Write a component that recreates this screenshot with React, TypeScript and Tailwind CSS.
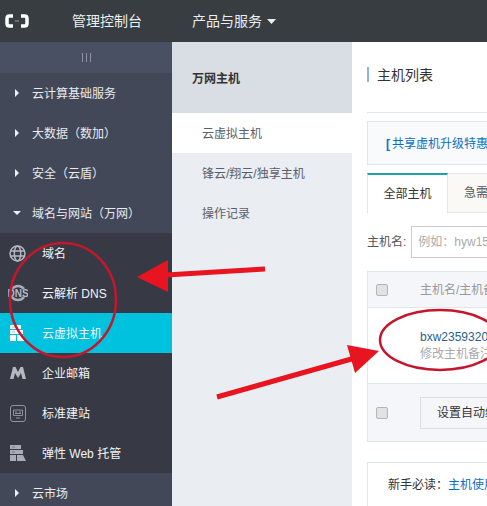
import type { ReactNode } from 'react';

const font = { fontFamily: '"Liberation Sans", "Noto Sans CJK SC", sans-serif' };

function Caret({ open }: { open?: boolean }) {
  return (
    <svg width="8" height="8" viewBox="0 0 8 8" className="shrink-0 text-[#eef0f3]">
      {open ? <path d="M0 2h8L4 6z" fill="currentColor" /> : <path d="M2 0l4 4-4 4z" fill="currentColor" />}
    </svg>
  );
}

function TopItem({ label, open }: { label: string; open?: boolean }) {
  return (
    <div className="flex h-10 items-center gap-[11px] pl-[13px] text-xs text-[#e8eaee]">
      <Caret open={open} />
      <span className="pt-[2px]">{label}</span>
    </div>
  );
}

function SubItem({ icon, label, active }: { icon: ReactNode; label: string; active?: boolean }) {
  return (
    <div className={`flex h-10 items-center text-xs text-[#f2f3f5] ${active ? 'bg-[#00c1de]' : ''}`}>
      <span className="flex w-[42px] justify-center pl-[1px] pr-[8px]">{icon}</span>
      <span className="pt-[2px]">{label}</span>
    </div>
  );
}

const GlobeIcon = (
  <svg width="17" height="17" viewBox="0 0 17 17" fill="none" stroke="#b4b8c0" strokeWidth="1.5">
    <circle cx="8.5" cy="8.5" r="7.5" />
    <ellipse cx="8.5" cy="8.5" rx="3.2" ry="7.5" />
    <path d="M1.5 6h14M1.5 11h14" />
  </svg>
);

const DnsIcon = (
  <svg width="20" height="18" viewBox="0 0 20 18" fill="none">
    <path d="M4 5a7.500 7.500 0 0 1 12 0M16 13a7.500 7.500 0 0 1-12 0" stroke="#a9adb5" strokeWidth="2.500" />
    <text x="10" y="12.500" textAnchor="middle" fontSize="10" fontWeight="700" fill="#b4b8c0" style={font}>DNS</text>
  </svg>
);

const HostIcon = ({ color }: { color: string }) => (
  <svg width="16" height="16" viewBox="0 0 16 16" fill={color}>
    <path d="M0 0h11v4H0zM0 5h13v4H0zM0 10h6v6H0zM7 10h6l3 6H7z" />
    <path d="M2 1.500h3v1H2zM2 6.500h3v1H2z" fill="#000" fillOpacity="0.3" />
  </svg>
);

const MailIcon = (
  <svg width="16" height="12" viewBox="0 0 16 12">
    <path d="M0 12 3 0h2.500L8 5l2.500-5H13l3 12h-3.500L11 6 8 11 5 6l-1.500 6z" fill="#b4b8c0" />
  </svg>
);

const SiteIcon = (
  <svg width="16" height="17" viewBox="0 0 16 17" fill="none" stroke="#8f939c">
    <rect x="0.500" y="0.500" width="15" height="16" rx="2.500" />
    <path d="M3.500 5h9v5.500h-9zM6 13h4M5 7h2M9 7h2M5 8.500h6" />
  </svg>
);

function Checkbox() {
  return <i className="h-3 w-3 shrink-0 rounded-[2px] border border-[#b5b5b5] bg-[#e2e2e2]" />;
}

export default function App() {
  return (
    <div className="relative flex h-[506px] w-[487px] flex-col overflow-hidden bg-white" style={font}>
      {/* top bar */}
      <header className="flex h-[42px] shrink-0 items-center bg-[#373d41] text-sm text-[#eceef0]">
        <span className="ml-[5px] flex w-[67px] items-center">
          <svg width="24" height="14" viewBox="0 0 24 14" fill="none" stroke="#fff" strokeWidth="3.500">
            <path d="M8 2H4.500Q2 2 2 4.500v5Q2 12 4.500 12H8M16 2h3.500Q22 2 22 4.500v5q0 2.500-2.500 2.500H16" />
            <path d="M10 7h4" strokeWidth="1" stroke="#9aa0a5" />
          </svg>
        </span>
        <span className="w-[120px]">管理控制台</span>
        <span>产品与服务</span>
        <svg width="9" height="5" viewBox="0 0 9 5" className="ml-[5px]"><path d="M0 0h9L4.500 5z" fill="#eceef0" /></svg>
      </header>

      <div className="flex min-h-0 flex-1">
        {/* dark sidebar */}
        <aside className="w-[172px] shrink-0 bg-[#424858]">
          <div className="flex h-[31px] items-center justify-center gap-[3px] bg-[#4a5064] pb-[1px]">
            <i className="h-[9px] w-px bg-[#8e93a3]" />
            <i className="h-[9px] w-px bg-[#8e93a3]" />
            <i className="h-[9px] w-px bg-[#8e93a3]" />
          </div>
          <TopItem label="云计算基础服务" />
          <TopItem label="大数据（数加）" />
          <TopItem label="安全（云盾）" />
          <TopItem label="域名与网站（万网）" open />
          <div className="bg-[#373a45]">
            <SubItem icon={GlobeIcon} label="域名" />
            <SubItem icon={DnsIcon} label="云解析 DNS" />
            <SubItem icon={<HostIcon color="#ffffff" />} label="云虚拟主机" active />
            <SubItem icon={MailIcon} label="企业邮箱" />
            <SubItem icon={SiteIcon} label="标准建站" />
            <SubItem icon={<HostIcon color="#a9adb5" />} label="弹性 Web 托管" />
          </div>
          <TopItem label="云市场" />
        </aside>

        {/* second column */}
        <nav className="w-[180px] shrink-0 bg-[#eaedf1] text-xs text-[#595f69]">
          <div className="flex h-[71px] items-center bg-[#d9dee4] pl-5 pt-[2px] font-bold text-[#333]">万网主机</div>
          <div className="flex h-10 items-center bg-white pl-[30px] pt-[2px]">云虚拟主机</div>
          <div className="flex h-10 items-center pl-[30px] pt-[2px]">锋云/翔云/独享主机</div>
          <div className="flex h-10 items-center pl-[30px] pt-[2px]">操作记录</div>
        </nav>

        {/* main */}
        <main className="min-w-0 flex-1 overflow-hidden pl-[15px] text-xs">
          <div className="w-[600px]">
            <div className="flex h-[71px] items-center gap-2 border-b border-[#e1e6eb] pb-[5px] text-sm text-[#333]">
              <i className="h-[15px] w-[2px] bg-[#88b7e0]" />
              主机列表
            </div>
            <div className="mt-2 flex h-[44px] items-center border border-[#dde6ee] bg-[#f8fafc] pl-[18px] pt-[2px] text-[#0b6fbf]">
              <b className="mr-[2px]">[</b>共享虚机升级特惠活动
            </div>
            <div className="mt-2 flex h-10 border-b border-[#e1e6eb]">
              <div className="-mb-px flex w-[81px] items-center justify-center border-x border-t-2 border-[#e1e6eb] border-t-[#1fa0b5] bg-white text-[#333]">全部主机</div>
              <div className="flex w-[105px] items-center justify-center border-r border-t border-[#e1e6eb] bg-[#fbf9f6] text-[#555]">急需续费主机</div>
            </div>
            <div className="mt-[13px] flex h-[32px] items-center gap-[5px] text-[#555]">
              主机名:
              <div className="flex h-[32px] w-[220px] items-center border border-[#ccc] pl-[6px] text-[#aaa]">例如：hyw15</div>
            </div>
            <div className="mt-[13px] border border-[#e1e6eb]">
              <div className="flex h-[36px] items-center border-b border-[#e1e6eb] bg-[#f5f6fa] pl-[8px] text-[#999]">
                <Checkbox />
                <span className="ml-[32px]">主机名/主机备注</span>
              </div>
              <div className="flex h-[76px] flex-col justify-center border-b border-[#e1e6eb] pl-[52px] leading-[17px]">
                <span className="text-[#2a5f8a]">bxw2359320</span>
                <span className="text-[#aaa]">修改主机备注</span>
              </div>
              <div className="flex h-[57px] items-center bg-[#f5f6fa] pl-[8px]">
                <Checkbox />
                <div className="ml-[32px] flex h-8 w-[120px] items-center border border-[#ddd] pl-4 text-[#333]">设置自动续费</div>
              </div>
            </div>
            <div className="mt-[20px] h-[60px] border border-[#e1e6eb] pl-[20px] pt-[14px] text-[#333]">
              新手必读：<span className="text-[#0b6fbf]">主机使用手册</span>
            </div>
          </div>
        </main>
      </div>

      {/* hand-drawn annotations on top of the screenshot */}
      <svg width="487" height="506" className="pointer-events-none absolute left-0 top-0" fill="none">
        <ellipse cx="63" cy="300" rx="53" ry="57" stroke="#c4172c" strokeWidth="2.500" />
        <ellipse cx="440" cy="340" rx="60" ry="30" stroke="#c4172c" strokeWidth="2.500" />
        <path d="M265 269 166 275" stroke="#e8141f" strokeWidth="5" />
        <path d="M137 277 168 260 168 292z" fill="#e8141f" />
        <path d="M217 397 355 358" stroke="#e8141f" strokeWidth="5" />
        <path d="M379 351 347 345 355 373z" fill="#e8141f" />
      </svg>
    </div>
  );
}
